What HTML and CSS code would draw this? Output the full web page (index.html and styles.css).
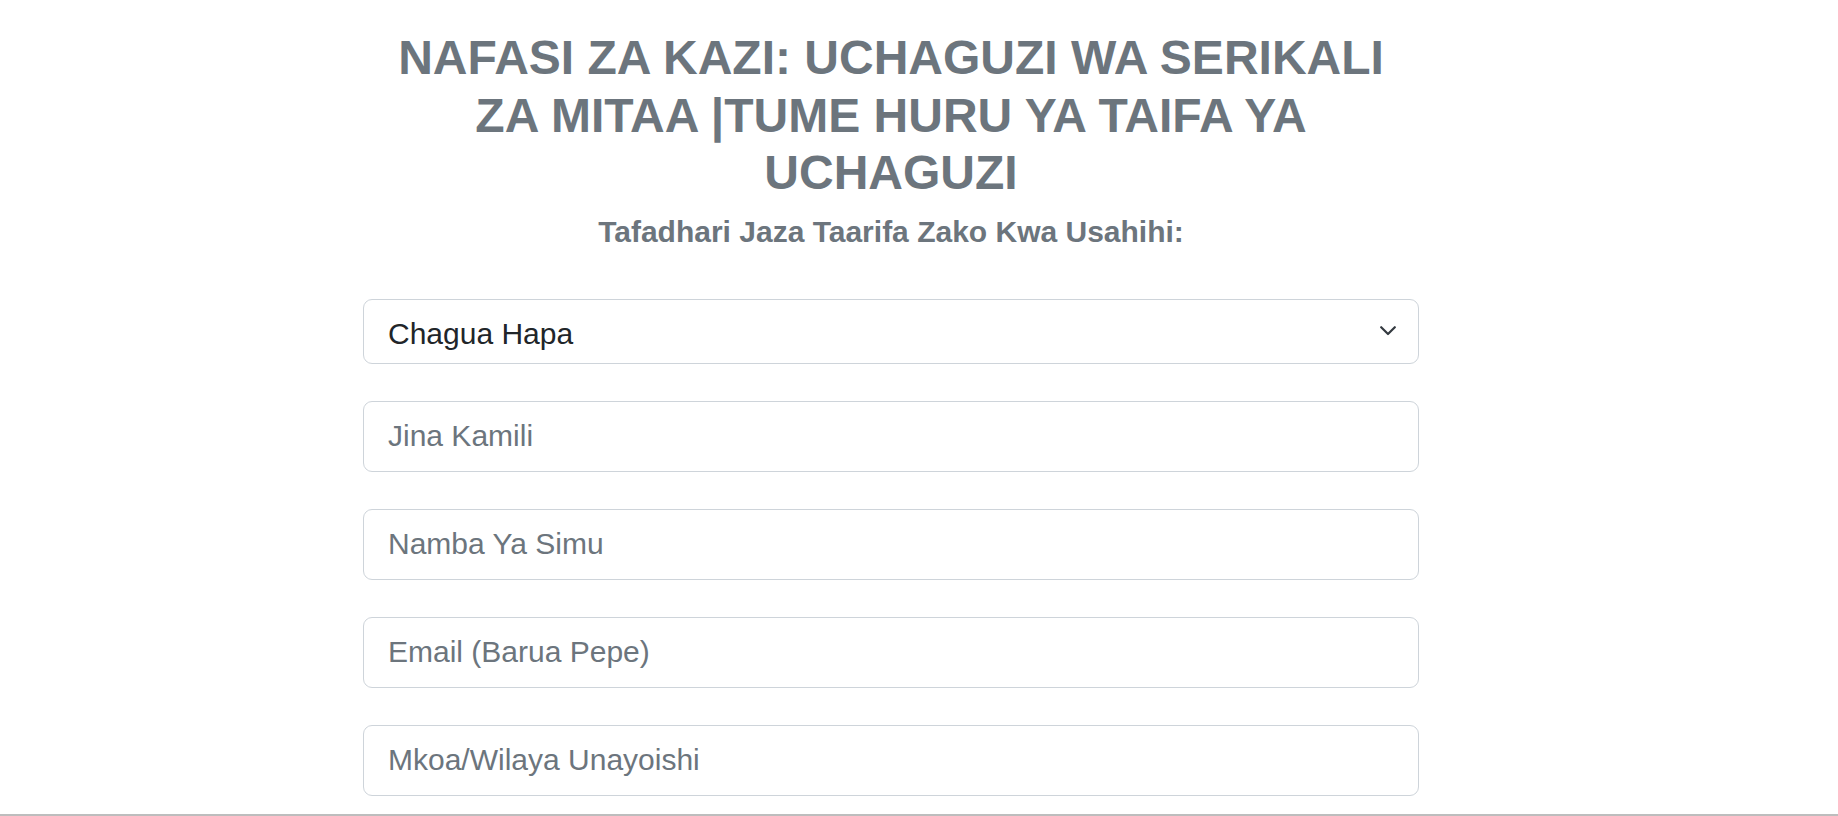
FILE: index.html
```html
<!DOCTYPE html>
<html lang="sw">
  <head>
    <title>Nafasi za Kazi</title>
    <meta charset="UTF-8">
    <meta name="viewport" content="width=device-width, initial-scale=1.0">
    <link rel="stylesheet" href="styles.css">
  </head>

  <body>
    <div id="page">
      <div id="form-box">
        <h1 class="title">NAFASI ZA KAZI: UCHAGUZI WA SERIKALI ZA MITAA |TUME HURU YA TAIFA YA UCHAGUZI</h1>
        <h5 class="subtitle">Tafadhari Jaza Taarifa Zako Kwa Usahihi:</h5>

        <form>
          <div class="field select-field">
            <select class="form-select">
              <option>Chagua Hapa</option>
              <option>Msimamizi wa Kituo</option>
              <option>Karani Mwandikishaji</option>
            </select>
            <svg class="chevron" width="16" height="10" viewBox="0 0 16 10">
              <polyline points="1.2,1.2 8,8 14.8,1.2" fill="none" stroke="#343a40" stroke-width="2.2" stroke-linecap="round" stroke-linejoin="round"/>
            </svg>
          </div>
          <div class="field">
            <input class="form-control" type="text" placeholder="Jina Kamili">
          </div>
          <div class="field">
            <input class="form-control" type="tel" placeholder="Namba Ya Simu">
          </div>
          <div class="field">
            <input class="form-control" type="email" placeholder="Email (Barua Pepe)">
          </div>
          <div class="field">
            <input class="form-control" type="text" placeholder="Mkoa/Wilaya Unayoishi">
          </div>
        </form>
      </div>
    </div>

    <div id="bottom-line"></div>
  </body>
</html>
```

FILE: styles.css
```css
body {
  margin: 0;
  background-color: #fff;
  font-family: "Liberation Sans", Arial, sans-serif;
  color: #212529;
}

#page {
  width: 1782px;
  padding-top: 29px;
}

#form-box {
  width: 1056px;
  margin: 0 auto;
}

.title {
  margin: 0 0 12px;
  font-size: 48px;
  line-height: 1.2;
  font-weight: 700;
  text-align: center;
  color: #6c757d;
}

.subtitle {
  margin: 0 0 49px;
  font-size: 30px;
  line-height: 36px;
  font-weight: 700;
  text-align: center;
  color: #6c757d;
}

form {
  margin: 0;
}

.field {
  margin-bottom: 37px;
}

.select-field {
  position: relative;
}

.form-select, .form-control {
  display: block;
  width: 100%;
  box-sizing: border-box;
  margin: 0;
  font-family: "Liberation Sans", Arial, sans-serif;
  font-size: 30px;
  line-height: 45px;
  color: #212529;
  background-color: #fff;
  border: 1px solid #ced4da;
  border-radius: 9px;
  outline: none;
}

.form-select {
  height: 65px;
  padding: 11px 72px 7px 24px;
  appearance: none;
  -webkit-appearance: none;
}

.form-control {
  height: 71px;
  padding: 12px 24px;
}

.form-control::placeholder {
  color: #6c757d;
  opacity: 1;
}

.chevron {
  position: absolute;
  right: 23px;
  top: 27px;
  pointer-events: none;
}

#bottom-line {
  position: fixed;
  left: 0;
  right: 0;
  bottom: 0;
  height: 2px;
  background-color: #bdbdbd;
}
```
